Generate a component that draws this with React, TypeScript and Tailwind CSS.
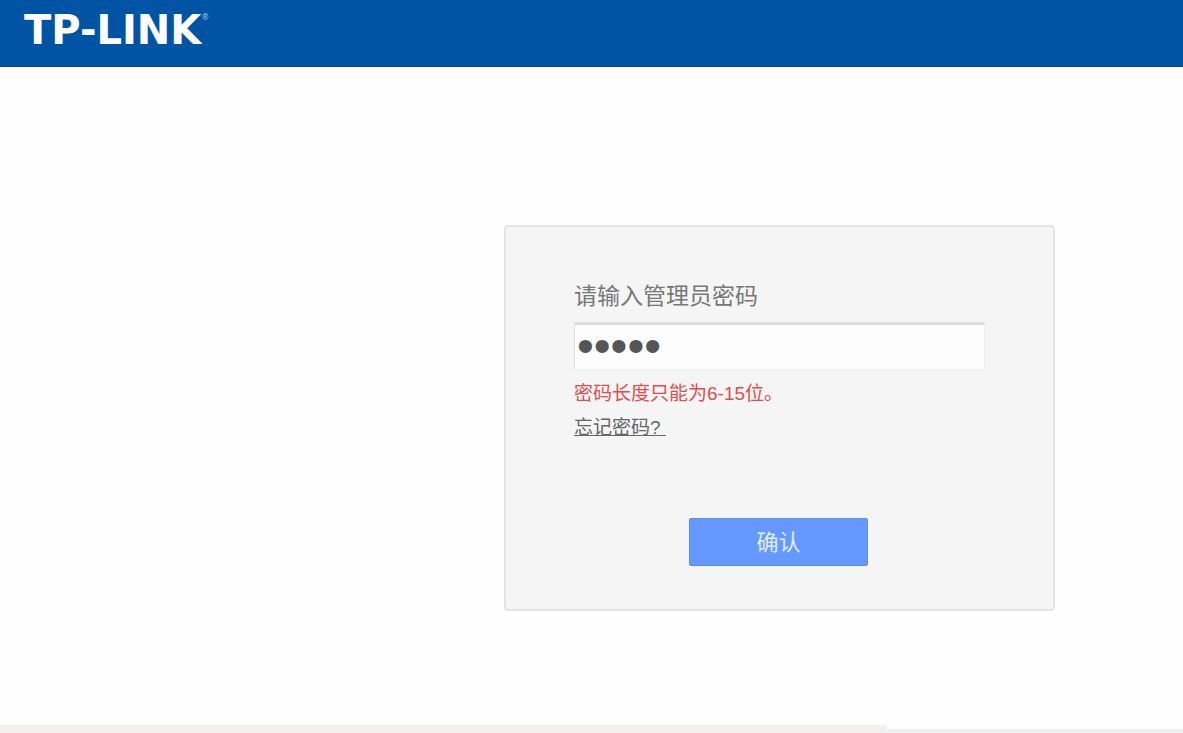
import { useState } from "react";

const cjk = "font-['Liberation_Sans','Noto_Sans_CJK_SC',sans-serif]";

function Header() {
  return (
    <header className="flex h-[67px] items-start border-b border-[#07468f] bg-[#0054a3] px-6 pt-2">
      <h1 className="flex items-start font-['DejaVu_Sans',sans-serif] text-white">
        <span className="text-[40px] leading-11 font-bold">TP-LINK</span>
        <span className="pt-1 text-[8px] text-[#9cc4ee]">®</span>
      </h1>
    </header>
  );
}

function LoginCard() {
  const [password, setPassword] = useState("admin");

  return (
    <form
      onSubmit={(e) => e.preventDefault()}
      className="flex w-full max-w-[551px] flex-col rounded-sm border-2 border-[#e4e4e4] bg-[#f5f5f5] px-[68px] pt-[51px] pb-[43px]"
    >
      <label htmlFor="password" className="text-[23px] leading-9 text-[#777]">
        请输入管理员密码
      </label>
      <input
        id="password"
        type="password"
        value={password}
        onChange={(e) => setPassword(e.target.value)}
        className="mt-2 h-12 w-full rounded-xs border border-t-3 border-[#efefef] border-t-[#dcdcdc] border-l-[#dedede] bg-[#fdfdfd] px-0.5 pb-1 font-['Liberation_Sans',sans-serif] text-5xl text-[#555] outline-none"
      />
      <p className="mt-2 text-[19px] leading-8 text-[#e54b50]">密码长度只能为6-15位。</p>
      <a href="#forgot" className="self-start text-[19px] leading-9 text-[#666] underline">
        忘记密码?&nbsp;
      </a>
      <button
        type="submit"
        className="mt-[72px] ml-[115px] h-12 w-[179px] rounded-xs border border-[#5b8df0] bg-[#6699ff] text-[22px] text-[#e0edff]"
      >
        确认
      </button>
    </form>
  );
}

export default function App() {
  return (
    <div className={`flex min-h-screen flex-col bg-[#fefefe] ${cjk}`}>
      <Header />
      <main className="flex flex-1 items-start justify-end pt-[158px] pr-32 pb-16 pl-8">
        <LoginCard />
      </main>
      <footer>
        <div className="h-1 w-3/4 bg-[#f5efeb]" />
        <div className="h-1 bg-[#f0f0f0]" />
      </footer>
    </div>
  );
}
